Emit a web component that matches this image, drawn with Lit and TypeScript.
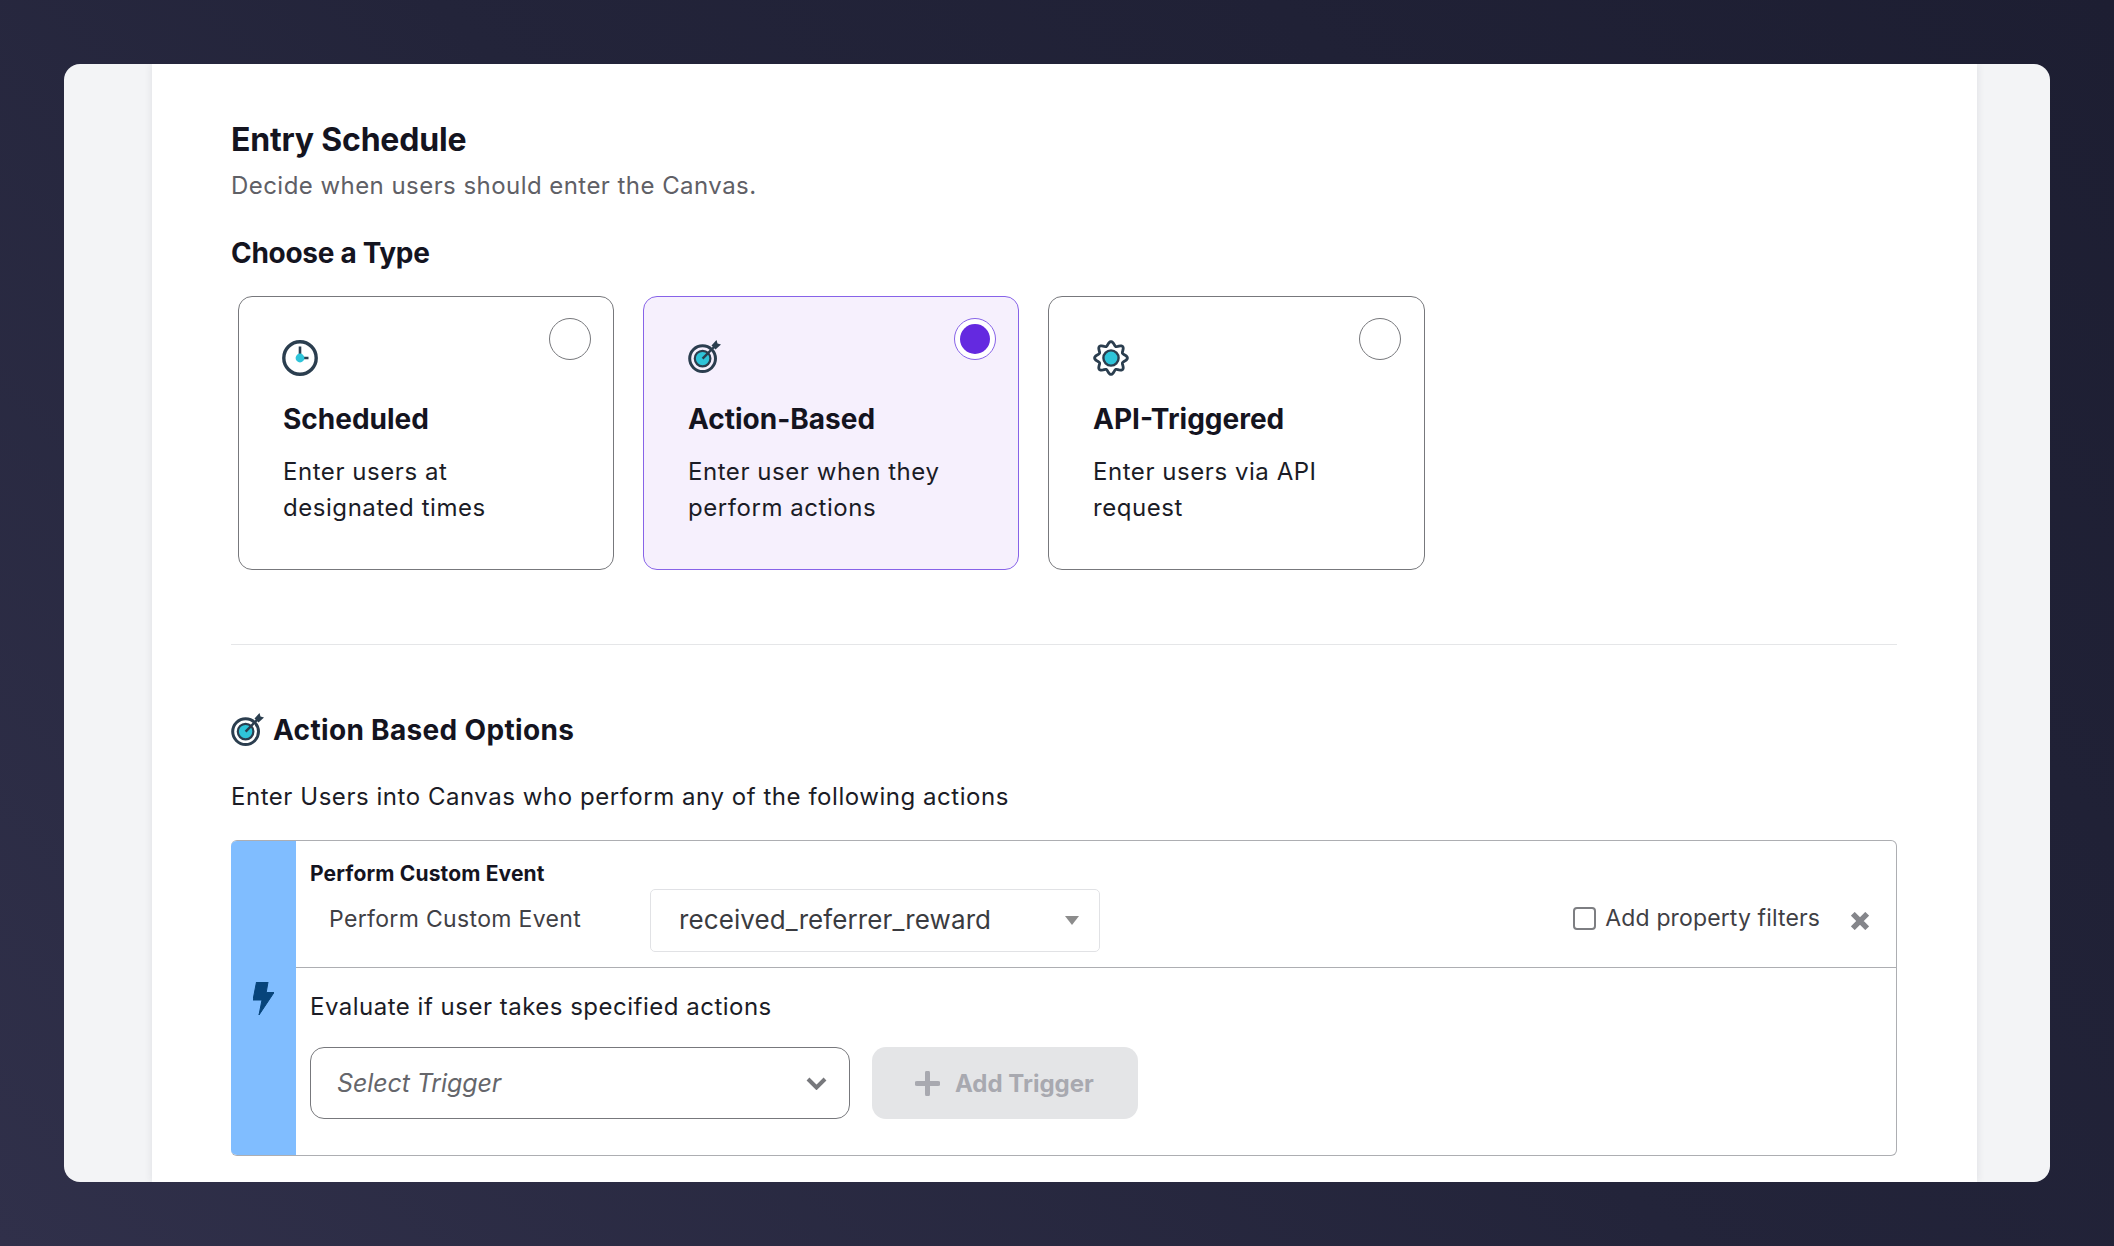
import { LitElement, html, css, svg } from 'lit';
import { customElement } from 'lit/decorators.js';
import { classMap } from 'lit/directives/class-map.js';

const DARK = '#2b3e4f';
const TEAL = '#2fc4d9';

const clockIcon = html`<svg width="36" height="36" viewBox="0 0 36 36">
  <circle cx="18" cy="18" r="16.2" fill="none" stroke="${DARK}" stroke-width="3.4"></circle>
  <path d="M18 6.5V18h8.5" fill="none" stroke="${DARK}" stroke-width="2.6"></path>
  <circle cx="18" cy="18" r="4.4" fill="${TEAL}"></circle>
</svg>`;

const targetIcon = html`<svg width="33" height="33" viewBox="0 0 33 33">
  <circle cx="14.6" cy="18.6" r="12.9" fill="none" stroke="${DARK}" stroke-width="3"></circle>
  <circle cx="14.6" cy="18.6" r="7.8" fill="${TEAL}" stroke="${DARK}" stroke-width="2.2"></circle>
  <path d="M14.6 18.6 27 6" fill="none" stroke="${DARK}" stroke-width="2.4"></path>
  <path d="M23.5 5.5 28.5 0 29.5 3.5 33 4.5 27.5 9.5z" fill="${DARK}"></path>
</svg>`;

// scalloped outline for the cog, sampled round the circle
const gearPath = () => {
  const pts: string[] = [];
  for (let i = 0; i < 96; i++) {
    const a = (i / 96) * Math.PI * 2;
    const r = 14.4 + 2 * Math.cos(a * 8);
    pts.push(`${(18 + r * Math.cos(a)).toFixed(2)} ${(18 + r * Math.sin(a)).toFixed(2)}`);
  }
  return `M${pts.join('L')}Z`;
};

const gearIcon = html`<svg width="36" height="36" viewBox="0 0 36 36">
  ${svg`<path d="${gearPath()}" fill="none" stroke="${DARK}" stroke-width="2.8" stroke-linejoin="round"></path>`}
  <circle cx="18" cy="18" r="7.6" fill="${TEAL}" stroke="${DARK}" stroke-width="2.4"></circle>
</svg>`;

const TYPES = [
  { title: 'Scheduled', lines: ['Enter users at', 'designated times'], icon: clockIcon, selected: false },
  { title: 'Action-Based', lines: ['Enter user when they', 'perform actions'], icon: targetIcon, selected: true },
  { title: 'API-Triggered', lines: ['Enter users via API', 'request'], icon: gearIcon, selected: false },
];

@customElement('app-root')
export class AppRoot extends LitElement {
  static styles = css`
    :host {
      display: block;
      height: 1246px;
      box-sizing: border-box;
      padding: 64px;
      background: linear-gradient(225deg, #1d1e32 0%, #23243a 50%, #30304a 100%);
      font-family: 'Inter', 'Noto Sans', sans-serif;
      color: #1b1c26;
    }
    .window {
      height: 1118px;
      background: #f3f4f6;
      border-radius: 16px;
      overflow: hidden;
    }
    .panel {
      box-sizing: border-box;
      height: 100%;
      margin: 0 73px 0 88px;
      padding: 56px 80px 0 79px;
      background: #fff;
      box-shadow: 0 0 8px rgba(40, 44, 60, 0.1);
    }
    h1 {
      margin: 0;
      font-size: 32px;
      line-height: 40px;
      font-weight: 700;
      letter-spacing: -0.2px;
      color: #14141f;
    }
    .sub {
      margin: 8px 0 0;
      font-size: 24px;
      line-height: 36px;
      letter-spacing: 0.45px;
      color: #5f6066;
    }
    h2 {
      margin: 31px 0 0;
      font-size: 28px;
      line-height: 36px;
      font-weight: 700;
      letter-spacing: -0.3px;
      color: #14141f;
    }
    .types {
      display: flex;
      gap: 29px;
      margin: 25px 0 0 7px;
    }
    .type {
      position: relative;
      box-sizing: border-box;
      width: 376px;
      height: 274px;
      padding: 43px 0 0 44px;
      border: 1px solid #77787c;
      border-radius: 14px;
    }
    .type:last-child {
      width: 377px;
    }
    .type.selected {
      background: #f6f0fd;
      border-color: #8763e8;
    }
    .type-icon {
      display: flex;
      align-items: flex-start;
      height: 36px;
    }
    .type:first-child .type-icon {
      margin-left: -1px;
    }
    .type-title {
      margin-top: 25px;
      font-size: 28px;
      line-height: 36px;
      font-weight: 700;
      color: #14141f;
    }
    .type-text {
      margin-top: 17px;
      font-size: 24px;
      line-height: 36px;
      letter-spacing: 0.55px;
    }
    .radio {
      position: absolute;
      top: 21px;
      right: 22px;
      box-sizing: border-box;
      width: 42px;
      height: 42px;
      border: 1px solid #77787c;
      border-radius: 50%;
      background: #fff;
    }
    .type:last-child .radio {
      right: 23px;
    }
    .selected .radio {
      border-color: #8763e8;
      padding: 5px;
    }
    .selected .radio::after {
      content: '';
      display: block;
      width: 30px;
      height: 30px;
      border-radius: 50%;
      background: #6429e0;
    }
    .rule {
      height: 1px;
      margin-top: 74px;
      background: #e5e6e8;
    }
    .section-title {
      display: flex;
      align-items: center;
      gap: 9px;
      margin-top: 67px;
      font-size: 28px;
      line-height: 36px;
      font-weight: 700;
      letter-spacing: 0.33px;
      color: #14141f;
    }
    .section-title svg {
      margin-top: -1px;
    }
    .lead {
      margin-top: 31px;
      font-size: 24px;
      line-height: 36px;
      letter-spacing: 0.54px;
    }
    .trigger-box {
      display: flex;
      margin-top: 25px;
      border: 1px solid #adaeb2;
      border-left: none;
      border-radius: 6px;
      overflow: hidden;
    }
    .band {
      flex: none;
      display: flex;
      align-items: center;
      justify-content: center;
      width: 65px;
      background: #80bdff;
    }
    .body {
      flex: 1;
    }
    .event {
      padding: 19px 0 15px 14px;
      border-bottom: 1px solid #adaeb2;
    }
    .event-title {
      font-size: 21px;
      line-height: 28px;
      font-weight: 700;
      letter-spacing: 0.15px;
      color: #14141f;
    }
    .event-row {
      display: flex;
      align-items: center;
      height: 63px;
      margin-top: 1px;
    }
    .event-label {
      width: 321px;
      margin-left: 19px;
      padding-bottom: 3px;
      font-size: 23px;
      letter-spacing: 0.34px;
      color: #3f4045;
    }
    .event-select {
      box-sizing: border-box;
      display: flex;
      align-items: center;
      justify-content: space-between;
      width: 450px;
      height: 63px;
      padding: 0 20px 0 28px;
      border: 1px solid #e1e2e5;
      border-radius: 5px;
      font-size: 26px;
      letter-spacing: 0.1px;
      color: #3a3b40;
    }
    .event-select span {
      padding-bottom: 3px;
    }
    .filters {
      display: flex;
      align-items: center;
      margin-left: auto;
      padding-bottom: 4px;
      font-size: 23px;
      letter-spacing: 0.13px;
      color: #3f4045;
    }
    .filters span {
      padding-bottom: 2px;
    }
    .check {
      box-sizing: border-box;
      width: 23px;
      height: 23px;
      margin-right: 9px;
      border: 2px solid #7d7e82;
      border-radius: 4px;
    }
    .close {
      margin: 0 27px 0 31px;
    }
    .evaluate {
      padding: 21px 0 36px 14px;
    }
    .evaluate-text {
      font-size: 24px;
      line-height: 36px;
      letter-spacing: 0.5px;
    }
    .trigger-row {
      display: flex;
      gap: 22px;
      margin-top: 22px;
    }
    .trigger-select {
      box-sizing: border-box;
      display: flex;
      align-items: center;
      justify-content: space-between;
      width: 540px;
      height: 72px;
      padding: 0 22px 0 26px;
      border: 1px solid #77787c;
      border-radius: 14px;
      font-size: 25px;
      font-style: italic;
      letter-spacing: -0.1px;
      color: #65666b;
    }
    .add {
      box-sizing: border-box;
      display: flex;
      align-items: center;
      gap: 15px;
      width: 266px;
      height: 72px;
      padding-left: 43px;
      border-radius: 14px;
      background: #e4e5e7;
      font-size: 24px;
      font-weight: 700;
      color: #a8a9b0;
    }
  `;

  render() {
    return html`
      <div class="window">
        <div class="panel">
          <h1>Entry Schedule</h1>
          <p class="sub">Decide when users should enter the Canvas.</p>
          <h2>Choose a Type</h2>
          <div class="types">
            ${TYPES.map(t => html`
              <div class=${classMap({ type: true, selected: t.selected })}>
                <div class="radio"></div>
                <div class="type-icon">${t.icon}</div>
                <div class="type-title">${t.title}</div>
                <div class="type-text">${t.lines[0]}<br />${t.lines[1]}</div>
              </div>
            `)}
          </div>
          <div class="rule"></div>
          <div class="section-title">${targetIcon}<span>Action Based Options</span></div>
          <div class="lead">Enter Users into Canvas who perform any of the following actions</div>
          <div class="trigger-box">
            <div class="band">
              <svg width="21" height="33" viewBox="0 0 21 33">
                <path d="M3.5 0H15L13.2 10.5H21L6 33 9 18H0z" fill="#07447b" stroke="#07447b" stroke-linejoin="round"></path>
              </svg>
            </div>
            <div class="body">
              <div class="event">
                <div class="event-title">Perform Custom Event</div>
                <div class="event-row">
                  <div class="event-label">Perform Custom Event</div>
                  <div class="event-select">
                    <span>received_referrer_reward</span>
                    <svg width="14" height="9" viewBox="0 0 14 9"><path d="M0 0h14L7 9z" fill="#8c8c8c"></path></svg>
                  </div>
                  <div class="filters">
                    <div class="check"></div>
                    <span>Add property filters</span>
                  </div>
                  <svg class="close" width="18" height="18" viewBox="0 0 18 18">
                    <path d="M1.8 1.8 16.2 16.2M16.2 1.8 1.8 16.2" stroke="#85868b" stroke-width="5.4"></path>
                  </svg>
                </div>
              </div>
              <div class="evaluate">
                <div class="evaluate-text">Evaluate if user takes specified actions</div>
                <div class="trigger-row">
                  <div class="trigger-select">
                    <span>Select Trigger</span>
                    <svg width="21" height="13" viewBox="0 0 21 13">
                      <path d="M2 2 10.5 10.5 19 2" fill="none" stroke="#77787c" stroke-width="4"></path>
                    </svg>
                  </div>
                  <div class="add">
                    <svg width="25" height="25" viewBox="0 0 25 25">
                      <path d="M12.5 2v21M2 12.5h21" stroke="#a8a9b0" stroke-width="5" stroke-linecap="round"></path>
                    </svg>
                    <span>Add Trigger</span>
                  </div>
                </div>
              </div>
            </div>
          </div>
        </div>
      </div>
    `;
  }
}
